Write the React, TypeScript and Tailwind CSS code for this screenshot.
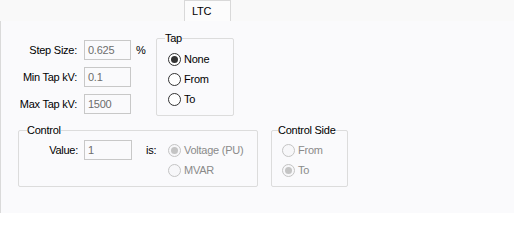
import React from "react";

function Radio({
  label,
  checked = false,
  disabled = false,
}: {
  label: string;
  checked?: boolean;
  disabled?: boolean;
}) {
  return (
    <div className="flex items-center h-[20px]">
      <div
        className={
          disabled
            ? "w-[13px] h-[13px] rounded-full border border-[#c4c4c4] bg-[#f7f7f9] flex items-center justify-center"
            : "w-[13px] h-[13px] rounded-full border border-[#333333] bg-white flex items-center justify-center"
        }
      >
        {checked && (
          <div
            className={
              disabled
                ? "w-[7px] h-[7px] rounded-full bg-[#c4c4c4]"
                : "w-[7px] h-[7px] rounded-full bg-[#333333]"
            }
          />
        )}
      </div>
      <span className={disabled ? "ml-[3px] text-[#8a8a8a]" : "ml-[3px] text-black"}>{label}</span>
    </div>
  );
}

function Field({ label, value, unit }: { label: string; value: string; unit?: string }) {
  return (
    <div className="flex items-center h-[20px]">
      <span className="w-[62px] text-right">{label}</span>
      <div className="ml-[7px] w-[47px] h-[20px] border border-[#c8c8c8] text-[#6d6d6d] pl-[3px] leading-[18px]">
        {value}
      </div>
      {unit && <span className="ml-[5px]">{unit}</span>}
    </div>
  );
}

export default function App() {
  return (
    <div className="w-[514px] h-[213px] flex flex-col bg-[#f9f9f9] font-['Liberation_Sans',Arial,sans-serif] text-[11px] tracking-[-0.25px] text-black overflow-hidden">
      <div className="h-[21px] flex shrink-0 pl-[184px]">
        <div className="w-[47px] h-[21px] bg-[#fcfcfc] border border-b-0 border-[#d9d9d9] pl-[7px] leading-[20px]">
          LTC
        </div>
      </div>
      <div className="flex-1 bg-[#fafafc] border-l border-[#dadada] flex flex-col">
        <div className="flex items-start pt-[10px]">
          <div className="w-[155px] flex flex-col gap-[7px] pt-[9px] pl-[14px]">
            <Field label="Step Size:" value="0.625" unit="%" />
            <Field label="Min Tap kV:" value="0.1" />
            <Field label="Max Tap kV:" value="1500" />
          </div>
          <fieldset className="w-[78px] h-[85px] border border-[#dcdcdc] rounded-[2px]">
            <legend className="ml-[8px] leading-[14px] px-0">Tap</legend>
            <div className="pl-[11px] mt-[4px] flex flex-col">
              <Radio label="None" checked />
              <Radio label="From" />
              <Radio label="To" />
            </div>
          </fieldset>
        </div>
        <div className="flex items-start mt-[7px]">
          <fieldset className="ml-[17px] w-[240px] h-[64px] border border-[#dcdcdc] rounded-[2px]">
            <legend className="ml-[8px] leading-[14px] px-0">Control</legend>
            <div className="flex items-start mt-[3px]">
              <div className="flex items-center h-[20px]">
                <span className="w-[59px] text-right">Value:</span>
                <div className="ml-[6px] w-[48px] h-[20px] border border-[#c8c8c8] text-[#6d6d6d] pl-[3px] leading-[18px]">
                  1
                </div>
                <span className="ml-[14px] w-[22px]">is:</span>
              </div>
              <div className="flex flex-col">
                <Radio label="Voltage (PU)" checked disabled />
                <Radio label="MVAR" disabled />
              </div>
            </div>
          </fieldset>
          <fieldset className="ml-[13px] w-[77px] h-[64px] border border-[#dcdcdc] rounded-[2px]">
            <legend className="ml-[6px] leading-[14px] px-0">Control Side</legend>
            <div className="pl-[10px] mt-[3px] flex flex-col">
              <Radio label="From" disabled />
              <Radio label="To" checked disabled />
            </div>
          </fieldset>
        </div>
      </div>
    </div>
  );
}
